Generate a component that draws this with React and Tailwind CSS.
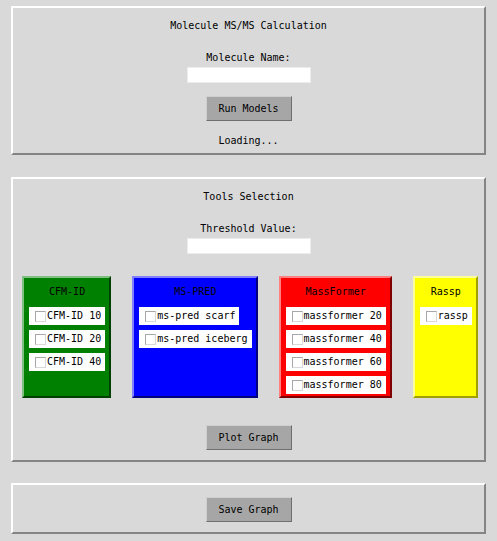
import React from 'react';

const font = { fontFamily: '"DejaVu Sans Mono", "Liberation Mono", monospace' };

const Frame = ({ className, children }) => (
    <div className={`mx-[11px] border-2 border-t-white border-l-white border-b-[#848484] border-r-[#848484] flex flex-col items-center ${className}`}>
        {children}
    </div>
);

const TkButton = ({ label, className }) => (
    <div className={`w-[86px] h-[25px] bg-[#a6a6a6] border border-t-[#cfcfcf] border-l-[#cfcfcf] border-b-[#6e6e6e] border-r-[#6e6e6e] flex items-center justify-center text-black ${className}`}>
        {label}
    </div>
);

const Entry = ({ className }) => (
    <div className={`w-[124px] h-[16px] bg-white border border-[#ececec] ${className}`} />
);

const Check = ({ label }) => (
    <div className="h-[18px] bg-white flex items-center pl-[6px] pr-[4px] self-start">
        <span className="w-[11px] h-[11px] bg-white border border-t-[#a8a8a8] border-l-[#a8a8a8] border-b-[#d8d8d8] border-r-[#d8d8d8] mr-[1px]" />
        <span className="whitespace-pre leading-none">{label}</span>
    </div>
);

const tools = [
    { name: 'CFM-ID', box: 'bg-[#008000] border-t-[#7fbf7f] border-l-[#7fbf7f] border-b-[#004000] border-r-[#004000]', items: ['CFM-ID 10', 'CFM-ID 20', 'CFM-ID 40'] },
    { name: 'MS-PRED', box: 'bg-[#0000ff] border-t-[#8080ff] border-l-[#8080ff] border-b-[#00007f] border-r-[#00007f]', items: ['ms-pred scarf', 'ms-pred iceberg'] },
    { name: 'MassFormer', box: 'bg-[#ff0000] border-t-[#ff8080] border-l-[#ff8080] border-b-[#7f0000] border-r-[#7f0000]', items: ['massformer 20', 'massformer 40', 'massformer 60', 'massformer 80'] },
    { name: 'Rassp', box: 'bg-[#ffff00] border-t-[#ffff99] border-l-[#ffff99] border-b-[#a0a000] border-r-[#a0a000]', items: ['rassp'] },
];

export default function App() {
    return (
        <div className="w-[497px] h-[541px] bg-[#d9d9d9] text-[10px] text-black overflow-hidden" style={font}>
            <div className="h-[6px]" />
            <Frame className="pt-[12px] pb-[6px]">
                <div className="h-[12px] leading-[12px]">Molecule MS/MS Calculation</div>
                <div className="h-[12px] leading-[12px] mt-[20px]">Molecule Name:</div>
                <Entry className="mt-[3px]" />
                <TkButton label="Run Models" className="mt-[13px]" />
                <div className="h-[12px] leading-[12px] mt-[14px]">Loading...</div>
            </Frame>

            <Frame className="mt-[22px] pt-[12px] pb-[10px]">
                <div className="h-[12px] leading-[12px]">Tools Selection</div>
                <div className="h-[12px] leading-[12px] mt-[20px]">Threshold Value:</div>
                <Entry className="mt-[3px]" />
                <div className="self-stretch flex items-stretch gap-[21px] pl-[9px] mt-[22px] h-[122px]">
                    {tools.map((t) => (
                        <div key={t.name} className={`border-2 flex flex-col items-start pl-[5px] pr-[4px] pt-[8px] gap-[5px] ${t.box}`}>
                            <div className="self-center h-[12px] leading-[12px] mb-[4px]">{t.name}</div>
                            {t.items.map((i) => (
                                <Check key={i} label={i} />
                            ))}
                        </div>
                    ))}
                </div>
                <TkButton label="Plot Graph" className="mt-[27px]" />
            </Frame>

            <Frame className="mt-[21px] pt-[12px] pb-[10px]">
                <TkButton label="Save Graph" />
            </Frame>
        </div>
    );
}
